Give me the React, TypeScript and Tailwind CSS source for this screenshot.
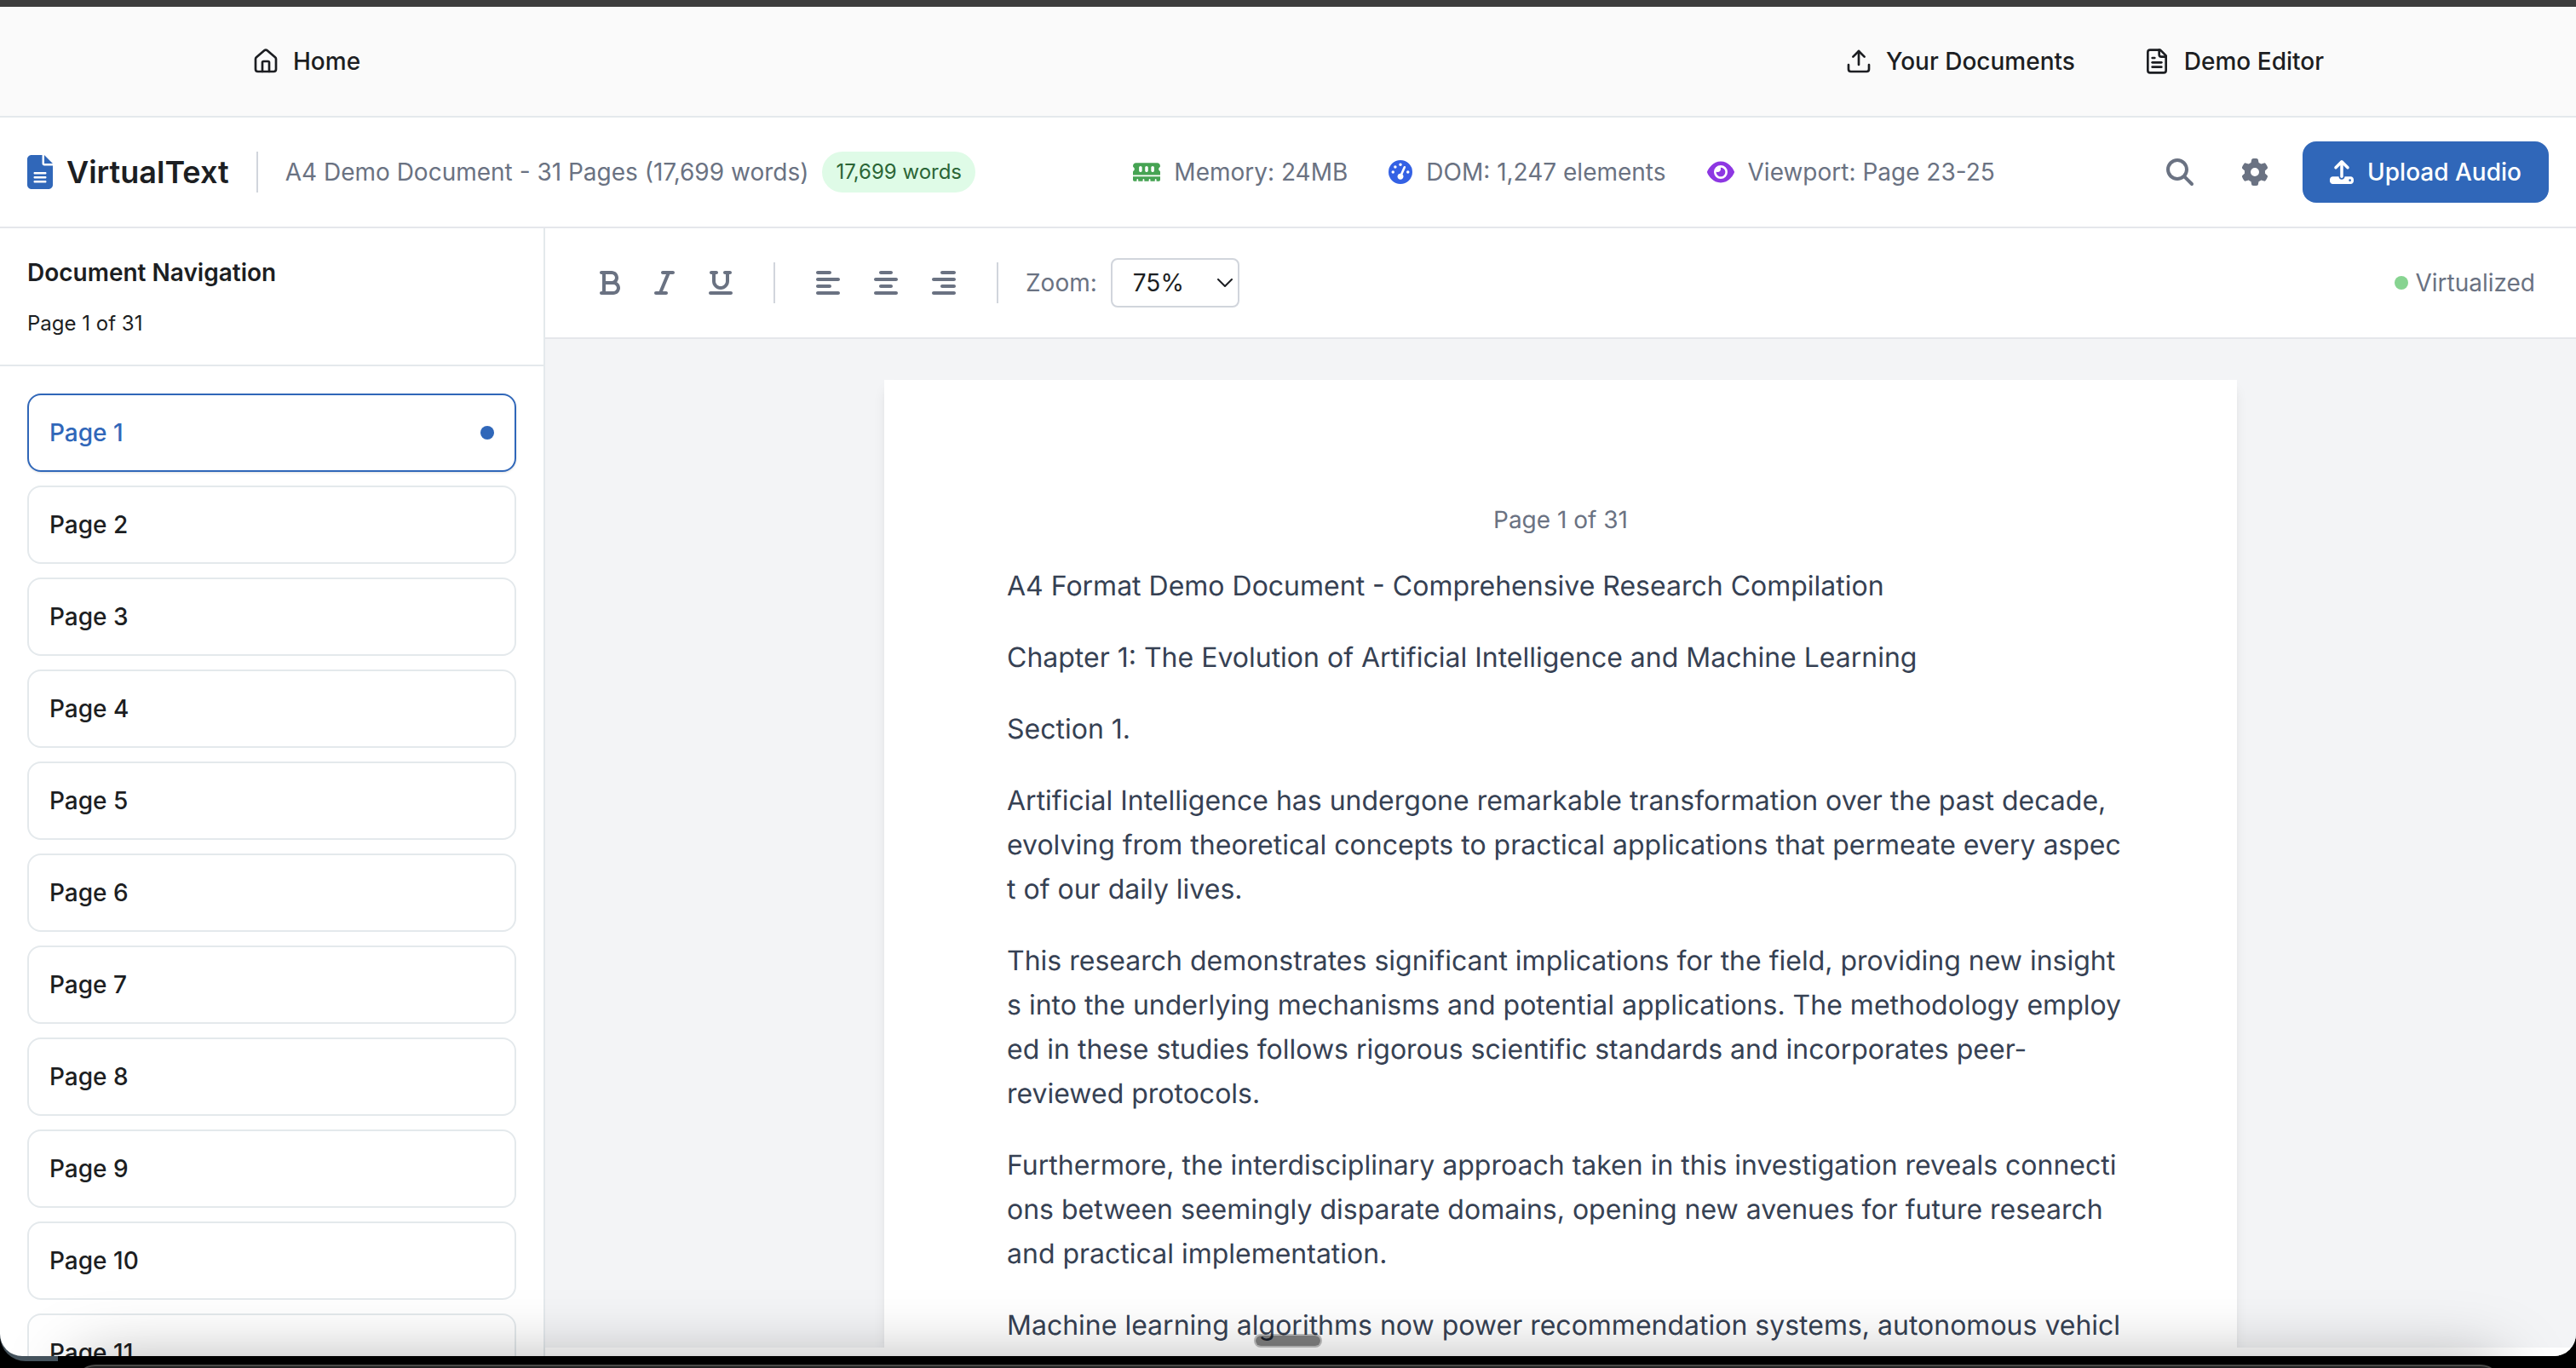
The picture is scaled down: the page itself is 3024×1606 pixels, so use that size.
import type { ReactNode } from "react";
import { House, Upload } from "lucide-react";
import {
  FaAlignCenter, FaAlignLeft, FaAlignRight, FaBold, FaEye, FaFileLines, FaGaugeHigh, FaGear,
  FaItalic, FaMagnifyingGlass, FaMemory, FaUnderline, FaUpload,
} from "react-icons/fa6";

const pages = Array.from({ length: 11 }, (_, i) => i + 1);

const paragraphs: string[][] = [
  ["A4 Format Demo Document - Comprehensive Research Compilation"],
  ["Chapter 1: The Evolution of Artificial Intelligence and Machine Learning"],
  ["Section 1."],
  [
    "Artificial Intelligence has undergone remarkable transformation over the past decade,",
    "evolving from theoretical concepts to practical applications that permeate every aspec",
    "t of our daily lives.",
  ],
  [
    "This research demonstrates significant implications for the field, providing new insight",
    "s into the underlying mechanisms and potential applications. The methodology employ",
    "ed in these studies follows rigorous scientific standards and incorporates peer-",
    "reviewed protocols.",
  ],
  [
    "Furthermore, the interdisciplinary approach taken in this investigation reveals connecti",
    "ons between seemingly disparate domains, opening new avenues for future research",
    "and practical implementation.",
  ],
  ["Machine learning algorithms now power recommendation systems, autonomous vehicl"],
];

function DocumentIcon() {
  return (
    <svg viewBox="0 0 24 24" className="size-8" fill="none" stroke="currentColor" strokeWidth="2" strokeLinecap="round" strokeLinejoin="round" aria-hidden="true">
      <path d="M15 2H6a2 2 0 0 0-2 2v16a2 2 0 0 0 2 2h12a2 2 0 0 0 2-2V7Z" />
      <path d="M14 2v4a2 2 0 0 0 2 2h4" />
      <path d="M10 9H8" />
      <path d="M16 13H8" />
      <path d="M16 17H8" />
    </svg>
  );
}

function NavLink({ icon, label }: { icon: ReactNode; label: string }) {
  return (
    <a href="#" className="flex items-center gap-4 px-10 font-medium">
      {icon}
      {label}
    </a>
  );
}

function ToolButton({ label, children }: { label: string; children: ReactNode }) {
  return (
    <button type="button" aria-label={label} className="p-4">
      {children}
    </button>
  );
}

function Stat({ icon, children }: { icon: ReactNode; children: ReactNode }) {
  return (
    <div className="flex items-center gap-4">
      {icon}
      <span>{children}</span>
    </div>
  );
}

export default function App() {
  return (
    <div className="relative flex h-screen flex-col overflow-hidden bg-black font-['Inter',sans-serif] text-[28px] leading-10 text-[#1c1e22]">
      <div className="absolute bottom-2 left-0 h-12 w-[68px] rounded-bl-[30px] bg-[#44525c]" />
      <div className="absolute inset-x-[88px] -bottom-10 h-11 rounded-t-[24px] border-t-2 border-[#4a4a48] bg-[#222222]" />
      <div className="h-2 shrink-0 bg-[#3d3d3d]" />
      <div className="relative mb-[14px] flex min-h-0 flex-1 flex-col overflow-hidden rounded-b-[26px] bg-white">
        <nav className="h-[130px] shrink-0 border-b-2 border-[#e4e9ec] bg-[#fafafa]">
          <div className="mx-auto flex h-full max-w-[2512px] items-center justify-between">
            <NavLink icon={<House className="size-8" />} label="Home" />
            <div className="flex items-center">
              <NavLink icon={<Upload className="size-8" />} label="Your Documents" />
              <NavLink icon={<DocumentIcon />} label="Demo Editor" />
            </div>
          </div>
        </nav>

        <header className="flex h-[130px] shrink-0 items-center justify-between border-b-2 border-gray-200 px-8 text-gray-500">
          <div className="flex items-center gap-8">
            <div className="flex items-center gap-4">
              <FaFileLines className="h-10 w-[30px] text-[#3067b9]" />
              <h1 className="text-[36px] font-semibold text-[#1c1e22]">VirtualText</h1>
            </div>
            <div className="h-12 w-0.5 bg-gray-300" />
            <div className="flex items-center gap-4">
              <span>A4 Demo Document - 31 Pages (17,699 words)</span>
              <span className="rounded-full bg-[#dffbe7] px-4 py-1 text-[24px] text-[#2b6536]">17,699 words</span>
            </div>
          </div>
          <div className="flex items-center gap-12">
            <Stat icon={<FaMemory className="size-8 text-[#46a353]" />}>Memory: 24MB</Stat>
            <Stat icon={<FaGaugeHigh className="size-7 text-[#3461e4]" />}>DOM: 1,247 elements</Stat>
            <Stat icon={<FaEye className="size-8 text-[#8d37e2]" />}>Viewport: Page 23-25</Stat>
          </div>
          <div className="flex items-center gap-6">
            <button type="button" aria-label="Search" className="p-4"><FaMagnifyingGlass className="size-8" /></button>
            <button type="button" aria-label="Settings" className="p-4"><FaGear className="size-8" /></button>
            <button type="button" className="flex items-center gap-4 rounded-2xl bg-[#3067b9] px-8 py-4 font-medium text-white">
              <FaUpload className="size-7" />
              Upload Audio
            </button>
          </div>
        </header>

        <div className="flex min-h-0 flex-1">
          <aside className="w-[640px] shrink-0 overflow-hidden border-r-2 border-[#e4e9ec]">
            <div className="border-b-2 border-[#e4e9ec] p-8">
              <h2 className="mb-6 font-semibold">Document Navigation</h2>
              <p className="text-[24px] leading-8">Page 1 of 31</p>
            </div>
            <div className="flex flex-col gap-4 p-8">
              {pages.map((n) => (
                <button
                  key={n}
                  type="button"
                  className={
                    n === 1
                      ? "flex h-[92px] items-center justify-between rounded-2xl border-2 border-[#3067b9] px-6 font-medium text-[#3067b9] shadow-sm"
                      : "flex h-[92px] items-center justify-between rounded-2xl border-2 border-[#e4e9ec] px-6 font-medium"
                  }
                >
                  Page {n}
                  {n === 1 && <span className="size-4 rounded-full bg-[#3067b9]" />}
                </button>
              ))}
            </div>
          </aside>

          <main className="flex min-w-0 flex-1 flex-col">
            <div className="flex h-[130px] shrink-0 items-center justify-between border-b-2 border-gray-200 px-12 text-gray-500">
              <div className="flex items-center gap-8">
                <div className="flex items-center gap-2">
                  <ToolButton label="Bold"><FaBold className="h-8 w-6" /></ToolButton>
                  <ToolButton label="Italic"><FaItalic className="h-8 w-6" /></ToolButton>
                  <ToolButton label="Underline"><FaUnderline className="h-8 w-7" /></ToolButton>
                </div>
                <div className="h-12 w-0.5 bg-gray-300" />
                <div className="flex items-center gap-2">
                  <ToolButton label="Align left"><FaAlignLeft className="h-8 w-7" /></ToolButton>
                  <ToolButton label="Align center"><FaAlignCenter className="h-8 w-7" /></ToolButton>
                  <ToolButton label="Align right"><FaAlignRight className="h-8 w-7" /></ToolButton>
                </div>
                <div className="h-12 w-0.5 bg-gray-300" />
                <div className="flex items-center gap-4">
                  <label htmlFor="zoom">Zoom:</label>
                  <div className="relative">
                    <select id="zoom" defaultValue="75%" className="h-[58px] w-[151px] appearance-none rounded-lg border-2 border-gray-300 bg-white px-6 text-[#1c1e22]">
                      <option>75%</option>
                      <option>100%</option>
                      <option>125%</option>
                    </select>
                    <svg viewBox="0 0 18 10" className="pointer-events-none absolute top-6 right-2 h-[10px] w-[18px] text-[#1c1e22]" fill="none" stroke="currentColor" strokeWidth="2" strokeLinecap="round" strokeLinejoin="round" aria-hidden="true">
                      <path d="M1 1l8 8 8-8" />
                    </svg>
                  </div>
                </div>
              </div>
              <div className="flex items-center gap-2">
                <span className="size-4 rounded-full bg-[#87d491]" />
                Virtualized
              </div>
            </div>

            <div className="min-h-0 flex-1 overflow-hidden bg-gray-100 pt-12">
              <article className="mx-auto min-h-full w-[1588px] bg-white px-36 pt-36 text-[32px] leading-[52px] text-gray-700 shadow-lg [text-rendering:geometricPrecision]">
                <p className="mb-8 text-center text-[28px] leading-10 text-gray-500">Page 1 of 31</p>
                <div className="flex flex-col gap-8 whitespace-nowrap">
                  {paragraphs.map((lines) => (
                    <p key={lines[0]}>
                      {lines.map((line) => (
                        <span key={line} className="block">{line}</span>
                      ))}
                    </p>
                  ))}
                </div>
              </article>
            </div>
            <div className="h-[10px] shrink-0 bg-white" />
          </main>
        </div>
        <div className="pointer-events-none absolute inset-x-[88px] -bottom-[90px] h-20 rounded-t-[24px] shadow-[0_0_80px_rgba(0,0,0,0.35)]" />
        <div className="absolute bottom-[10px] left-1/2 h-4 w-20 -translate-x-1/2 rounded-full border-2 border-black/25 bg-black/50 bg-clip-padding" />
      </div>
    </div>
  );
}
